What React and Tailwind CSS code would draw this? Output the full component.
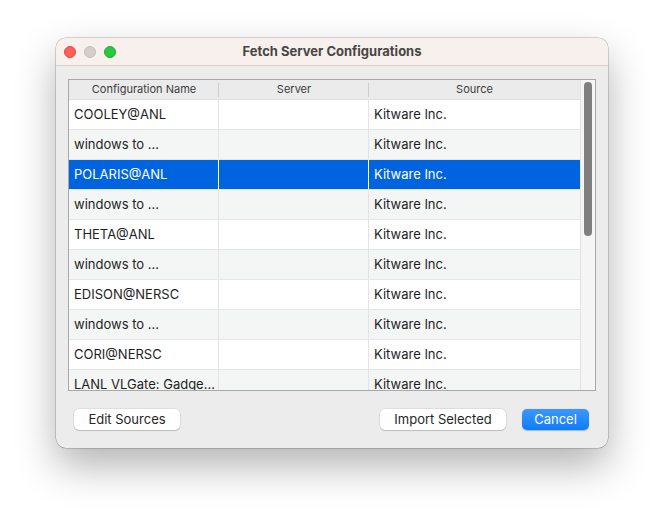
import React from 'react'

const rows = [
  { name: 'COOLEY@ANL', server: '', source: 'Kitware Inc.' },
  { name: 'windows to ...', server: '', source: 'Kitware Inc.' },
  { name: 'POLARIS@ANL', server: '', source: 'Kitware Inc.', selected: true },
  { name: 'windows to ...', server: '', source: 'Kitware Inc.' },
  { name: 'THETA@ANL', server: '', source: 'Kitware Inc.' },
  { name: 'windows to ...', server: '', source: 'Kitware Inc.' },
  { name: 'EDISON@NERSC', server: '', source: 'Kitware Inc.' },
  { name: 'windows to ...', server: '', source: 'Kitware Inc.' },
  { name: 'CORI@NERSC', server: '', source: 'Kitware Inc.' },
  { name: 'LANL VLGate: Gadge...', server: '', source: 'Kitware Inc.' },
]

const HeaderCell = ({ label, width, last }) => (
  <div className={`relative flex items-center justify-center h-full ${width}`}>
    <span className="text-[11px] text-[#3b3b3b]">{label}</span>
    {!last && <div className="absolute right-0 top-[3px] bottom-[2px] w-px bg-[#cdcdcd]" />}
  </div>
)

const Row = ({ row, index }) => {
  const bg = row.selected ? 'bg-[#0064e1]' : index % 2 === 0 ? 'bg-white' : 'bg-[#f4f5f5]'
  const text = row.selected ? 'text-white' : 'text-[#1e1e1e]'
  const sep = row.selected ? 'border-white' : 'border-[#e3e3e3]'
  return (
    <div className={`flex h-[30px] shrink-0 border-b border-[#e6e6e6] ${bg} ${text}`}>
      <div className={`w-[150px] flex items-center pl-[5px] pt-[1px] border-r ${sep} whitespace-nowrap overflow-hidden`}>{row.name}</div>
      <div className={`w-[150px] flex items-center pl-[5px] pt-[1px] border-r ${sep}`}>{row.server}</div>
      <div className="flex-1 flex items-center pl-[5px] pt-[1px]">{row.source}</div>
    </div>
  )
}

const Button = ({ children, primary, className = '' }) => (
  <button
    className={`h-[21px] rounded-[5px] text-[13px] leading-none ${
      primary
        ? 'bg-gradient-to-b from-[#3b97fc] to-[#0a7bfb] text-white shadow-[0_0.5px_1px_rgba(0,0,0,0.25)]'
        : 'bg-white text-[#262626] shadow-[0_0_0_0.5px_rgba(0,0,0,0.12),0_1px_1px_rgba(0,0,0,0.15)]'
    } ${className}`}
  >
    {children}
  </button>
)

export default function App() {
  return (
    <div
      className="w-[664px] h-[523px] bg-white pt-[38px] pl-[56px]"
      style={{ fontFamily: 'Inter, "Helvetica Neue", "Liberation Sans", sans-serif' }}
    >
      <div className="w-[552px] h-[410px] rounded-[10px] bg-[#ececec] overflow-hidden flex flex-col shadow-[0_0_0_0.5px_rgba(0,0,0,0.3),0_18px_40px_rgba(0,0,0,0.3)]">
        <div className="relative h-[28px] shrink-0 bg-[#f8f0ec] border-b border-[#d6d0cd] flex items-center justify-center">
          <div className="absolute left-[8px] top-[8px] flex gap-[8px]">
            <div className="w-[12px] h-[12px] rounded-full bg-[#fe5f57] border-[0.5px] border-[#e2463f]" />
            <div className="w-[12px] h-[12px] rounded-full bg-[#d5cfcc] border-[0.5px] border-[#c2bcb9]" />
            <div className="w-[12px] h-[12px] rounded-full bg-[#28c840] border-[0.5px] border-[#1aab29]" />
          </div>
          <span className="text-[13px] font-bold text-[#484544]">Fetch Server Configurations</span>
        </div>

        <div className="flex-1 flex flex-col px-[12px] pt-[13px]">
          <div className="h-[312px] border border-[#a8a8a8] flex bg-white overflow-hidden">
            <div className="w-[511px] flex flex-col overflow-hidden text-[13px]">
              <div className="flex h-[20px] shrink-0 bg-[#ebebeb] border-b border-[#e0e0e0]">
                <HeaderCell label="Configuration Name" width="w-[150px]" />
                <HeaderCell label="Server" width="w-[150px]" />
                <HeaderCell label="Source" width="flex-1" last />
              </div>
              {rows.map((r, i) => (
                <Row key={i} row={r} index={i} />
              ))}
            </div>
            <div className="flex-1 bg-[#f5f5f5] border-l border-[#e2e2e2] flex justify-center pt-[2px]">
              <div className="w-[8px] h-[154px] rounded-full bg-[#7f7f7f]" />
            </div>
          </div>

          <div className="flex items-center mt-[18px] pl-[6px] pr-[7px]">
            <Button className="w-[106px]">Edit Sources</Button>
            <div className="flex-1" />
            <Button className="w-[126px]">Import Selected</Button>
            <Button primary className="w-[67px] ml-[16px]">Cancel</Button>
          </div>
        </div>
      </div>
    </div>
  )
}
